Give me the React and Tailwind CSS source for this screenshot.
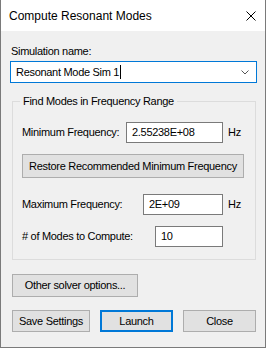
import React, { useState } from "react";

const font = { fontFamily: '"Liberation Sans", Arial, sans-serif' };

const Button = ({ children, className = "", primary = false }) => (
  <button
    type="button"
    className={`flex items-center justify-center whitespace-nowrap bg-[#e1e1e1] text-[11px] tracking-[-0.3px] text-black ${
      primary ? "border-2 border-[#0078d7]" : "border border-[#adadad]"
    } ${className}`}
  >
    {children}
  </button>
);

const FreqRow = ({ label, labelWidth, inputWidth, value, unit }) => (
  <div className="flex items-center h-[21px] whitespace-nowrap">
    <span className={`${labelWidth} shrink-0`}>{label}</span>
    <div
      className={`${inputWidth} shrink-0 h-[21px] bg-white border border-[#7a7a7a] flex items-center pl-[5px]`}
    >
      {value}
    </div>
    {unit && <span className="ml-[5px]">{unit}</span>}
  </div>
);

const App = () => {
  const [simName] = useState("Resonant Mode Sim 1");

  return (
    <div
      className="w-[266px] h-[348px] flex flex-col bg-[#f0f0f0] border-x border-b border-[#7a7a7a] text-black text-[11px] tracking-[-0.3px]"
      style={font}
    >
      {/* Title bar */}
      <div className="h-[31px] shrink-0 bg-white flex items-center justify-between pl-[8px] pr-[9px]">
        <span className="text-[12px] tracking-normal">Compute Resonant Modes</span>
        <svg width="10" height="10" viewBox="0 0 10 10">
          <path d="M0.5 0.5 L9.5 9.5 M9.5 0.5 L0.5 9.5" stroke="#000" strokeWidth="1" />
        </svg>
      </div>

      {/* Simulation name */}
      <div className="pl-[10px] mt-[13px] leading-[15px]">Simulation name:</div>
      <div className="ml-[9px] mt-[2px] w-[247px] h-[22px] shrink-0 bg-white border border-[#0078d7] flex items-center justify-between pl-[5px] pr-[7px]">
        <span className="flex items-center">
          {simName}
          <span className="inline-block w-px h-[14px] bg-black ml-[1px]" />
        </span>
        <svg width="8" height="5" viewBox="0 0 8 5">
          <path d="M0.5 0.5 L4 4 L7.5 0.5" fill="none" stroke="#555" strokeWidth="1" />
        </svg>
      </div>

      {/* Group box */}
      <div className="relative shrink-0 ml-[11px] mt-[18px] w-[244px] h-[159px] border border-[#dcdcdc] pl-[9px] pt-[20px]">
        <span className="absolute -top-[8px] left-[7px] px-[3px] bg-[#f0f0f0] leading-[15px] whitespace-nowrap">
          Find Modes in Frequency Range
        </span>
        <FreqRow
          label="Minimum Frequency:"
          labelWidth="w-[104px]"
          inputWidth="w-[97px]"
          value="2.55238E+08"
          unit="Hz"
        />
        <Button className="mt-[11px] w-[222px] h-[24px]">
          Restore Recommended Minimum Frequency
        </Button>
        <div className="mt-[16px]">
          <FreqRow
            label="Maximum Frequency:"
            labelWidth="w-[121px]"
            inputWidth="w-[80px]"
            value="2E+09"
            unit="Hz"
          />
        </div>
        <div className="mt-[11px]">
          <FreqRow
            label="# of Modes to Compute:"
            labelWidth="w-[133px]"
            inputWidth="w-[68px]"
            value="10"
          />
        </div>
      </div>

      {/* Buttons */}
      <Button className="ml-[11px] mt-[14px] w-[126px] h-[23px] shrink-0">Other solver options...</Button>
      <div className="flex ml-[11px] mt-[13px] gap-[9px]">
        <Button className="w-[78px] h-[22px]">Save Settings</Button>
        <Button primary className="w-[73px] h-[22px] ml-[1px]">
          Launch
        </Button>
        <Button className="w-[73px] h-[22px] ml-[1px]">Close</Button>
      </div>
    </div>
  );
};

export default App;
